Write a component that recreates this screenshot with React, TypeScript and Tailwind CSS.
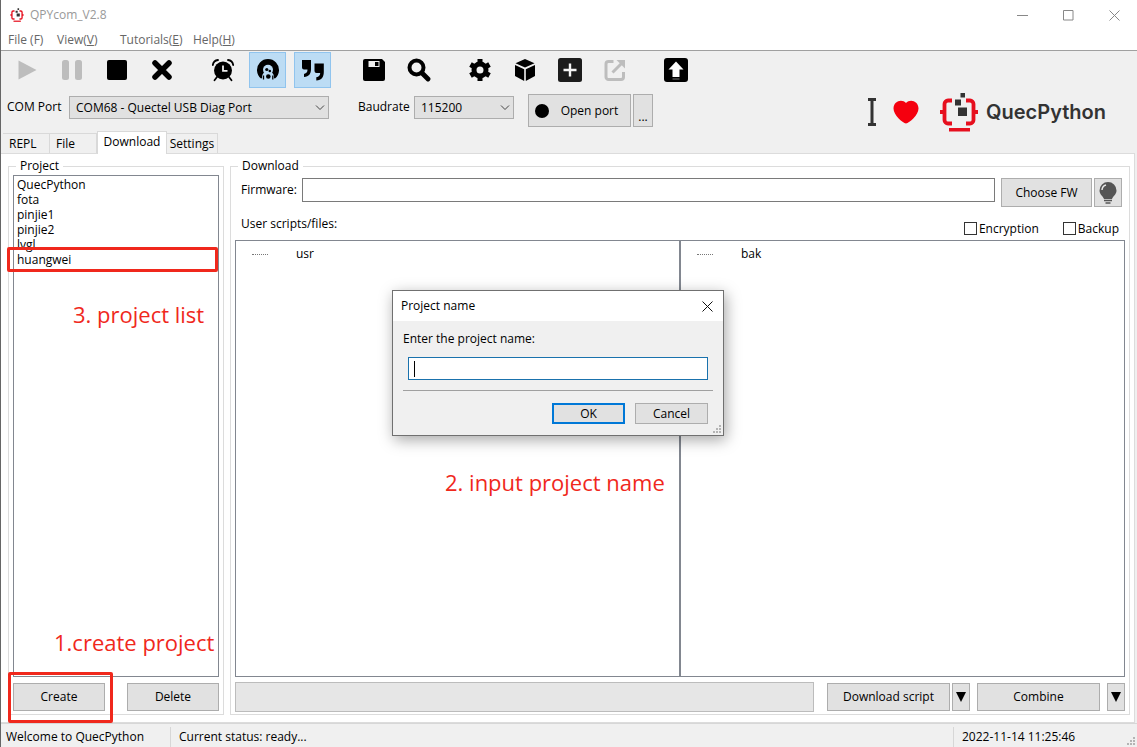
import { useState } from "react";
import type { ReactNode } from "react";
import clsx from "clsx";

const projects = ["QuecPython", "fota", "pinjie1", "pinjie2", "lvgl", "huangwei"];
const tabs = [
  { name: "REPL", width: "w-[47px]" },
  { name: "File", width: "w-[47px]" },
  { name: "Download", width: "w-[70px]" },
  { name: "Settings", width: "w-[51px]" },
];

function Icon({ children, className }: { children: ReactNode; className?: string }) {
  return (
    <svg viewBox="0 0 24 24" className={clsx("size-6", className)} fill="currentColor" aria-hidden="true">
      {children}
    </svg>
  );
}

const toolGroups: { label: string; on?: boolean; off?: boolean; icon: ReactNode }[][] = [
  [
    { label: "Run", off: true, icon: <path d="M3.500 2.500v19l18-9.500z" /> },
    {
      label: "Pause",
      off: true,
      icon: (
        <>
          <rect x="2" y="2" width="7" height="20" rx="2.500" />
          <rect x="15" y="2" width="7" height="20" rx="2.500" />
        </>
      ),
    },
    { label: "Stop", icon: <rect x="2" y="2" width="20" height="20" rx="2" /> },
    {
      label: "Clear",
      icon: <path d="M5 5l14 14M19 5L5 19" stroke="currentColor" strokeWidth="5.500" strokeLinecap="round" />,
    },
  ],
  [
    {
      label: "Timer",
      icon: (
        <>
          <circle cx="12" cy="12.500" r="9" />
          <path d="M1.800 7A6 6 0 0 1 7 2M17 2a6 6 0 0 1 5.200 5M6 19l-2.500 3.300M18 19l2.500 3.300" fill="none" stroke="currentColor" strokeWidth="1.800" strokeLinecap="round" />
          <path d="M12 7.500v5.300h4.500" fill="none" stroke="#efefef" strokeWidth="1.800" />
        </>
      ),
    },
    {
      label: "Debug",
      on: true,
      icon: (
        <>
          <path d="M5 20.500A11 11 0 1 1 19 20.500L12 18z" />
          <circle cx="12" cy="11.800" r="5" fill="#bcdcf4" />
          <circle cx="12" cy="19" r="6" fill="#bcdcf4" />
          <circle cx="10.800" cy="11.500" r="1.600" />
          <circle cx="13.800" cy="13" r="1.300" />
          <circle cx="12.300" cy="18.500" r="2.300" />
          <path d="M7.500 21.500v-4M16.800 21.500v-4" stroke="currentColor" strokeWidth="1.300" />
        </>
      ),
    },
    {
      label: "Quote",
      on: true,
      icon: (
        <>
          <path d="M1 2h9v9c0 5-2 7.500-7 8v-3c2.500-.7 3.500-2 3.500-4.500H3A2 2 0 0 1 1 9.500z" />
          <path d="M13.500 5.500h9.300V14c0 5-2 8-7.500 8.500v-3.300c2.700-.5 3.900-1.900 3.900-4.200h-3.700a2 2 0 0 1-2-2z" />
        </>
      ),
    },
  ],
  [
    {
      label: "Save",
      icon: (
        <>
          <path d="M1 3a2 2 0 0 1 2-2h17l3 3v17a2 2 0 0 1-2 2H3a2 2 0 0 1-2-2z" />
          <path d="M6.500 3h11v6h-11z" fill="#efefef" />
          <path d="M13 4h3.500v4H13z" />
        </>
      ),
    },
    {
      label: "Search",
      icon: (
        <>
          <circle cx="9.500" cy="9.500" r="7" fill="none" stroke="currentColor" strokeWidth="4" />
          <path d="M15 15l6 6" stroke="currentColor" strokeWidth="4.800" strokeLinecap="round" />
        </>
      ),
    },
  ],
  [
    {
      label: "Preferences",
      icon: (
        <>
          <circle cx="12" cy="12" r="6" fill="none" stroke="currentColor" strokeWidth="5" />
          <path d="M12 1v5M12 18v5M2.500 6.500l4.300 2.500M17.200 15l4.300 2.500M2.500 17.500L6.800 15M17.200 9l4.300-2.500" stroke="currentColor" strokeWidth="5" />
        </>
      ),
    },
    {
      label: "Package",
      icon: (
        <>
          <path d="M12 1l9.500 4.200L12 9.500 2.500 5.200z" />
          <path d="M2 7l9.200 4.200V23L2 18z" />
          <path d="M22 7l-9.200 4.200V23L22 18z" />
        </>
      ),
    },
    {
      label: "Add",
      icon: (
        <>
          <rect x="0" y="0" width="24" height="24" rx="2.500" fill="#1c1c1c" />
          <path d="M12 5.500v13M5.500 12h13" stroke="#f4f4f4" strokeWidth="2.400" />
        </>
      ),
    },
    {
      label: "Export",
      off: true,
      icon: (
        <>
          <path d="M10.500 3.500H5.500A2.500 2.500 0 0 0 3 6v13a2.500 2.500 0 0 0 2.500 2.500h12.500a2.500 2.500 0 0 0 2.500-2.500V14" fill="none" stroke="currentColor" strokeWidth="3" />
          <path d="M9.500 14.500L19 5" stroke="currentColor" strokeWidth="3" />
          <path d="M13.500 2h8.500v8.500z" />
        </>
      ),
    },
  ],
  [
    {
      label: "Upgrade",
      icon: (
        <>
          <rect x="0" y="0" width="24" height="24" rx="3" />
          <path d="M12 3.500l7.500 8h-4V19h-7v-7.500h-4z" fill="#fff" />
          <path d="M8.500 21h7" stroke="#777" />
        </>
      ),
    },
  ],
];

function BrandMark({ className }: { className?: string }) {
  return (
    <svg viewBox="0 0 40 40" className={className} aria-hidden="true">
      <path d="M13 8.500H9a3.500 3.500 0 0 0-3.500 3.500v16a3.500 3.500 0 0 0 3.500 3.500h4M27 8.500h4a3.500 3.500 0 0 1 3.500 3.500v16a3.500 3.500 0 0 1-3.500 3.500h-4M5 20H1M35 20h4" fill="none" stroke="#e60f1e" strokeWidth="3.800" />
      <path d="M10 36h21v3.500H10z" fill="#e60f1e" />
      <path d="M21.500 1h4.500v4.500h-4.500zM16 7.500h6v6h-6zM19 15.500h9v8.500h-9z" fill="#333" />
    </svg>
  );
}

function Grip({ className }: { className?: string }) {
  return (
    <svg viewBox="0 0 8 8" className={clsx("size-2", className)} fill="#b4b4b4" aria-hidden="true">
      <path d="M6 0h2v2H6zM3 3h2v2H3zM6 3h2v2H6zM0 6h2v2H0zM3 6h2v2H3zM6 6h2v2H6z" />
    </svg>
  );
}

function Picker({ id, value, className }: { id: string; value: string; className: string }) {
  return (
    <div className={clsx("relative mt-0.5", className)}>
      <select id={id} className="h-[23px] w-full appearance-none border border-[#adadad] bg-[#e1e1e1] pl-1.5">
        <option>{value}</option>
      </select>
      <svg viewBox="0 0 10 6" className="pointer-events-none absolute top-[9px] right-1 h-1.5 w-2.5" fill="none" stroke="#444" aria-hidden="true">
        <path d="M1 .5l4 4 4-4" />
      </svg>
    </div>
  );
}

function Push({ children, className, label }: { children: ReactNode; className?: string; label?: string }) {
  return (
    <button type="button" aria-label={label} className={clsx("flex items-center justify-center border border-[#adadad] bg-[#e1e1e1]", className)}>
      {children}
    </button>
  );
}

function Check({ label }: { label: string }) {
  return (
    <label className="flex items-center gap-0.5">
      <input type="checkbox" className="size-[13px] appearance-none border border-[#333] bg-white checked:bg-[#0078d7]" />
      {label}
    </label>
  );
}

function Arrow() {
  return (
    <svg viewBox="0 0 10 10" className="size-2.5" aria-hidden="true">
      <path d="M0 0h10L5 10z" />
    </svg>
  );
}

function Root({ name }: { name: string }) {
  return (
    <div className="flex h-5 items-center gap-7 pl-4">
      <span className="w-4 border-t border-dotted border-[#777]" />
      {name}
    </div>
  );
}

function ProjectDialog() {
  const [name, setName] = useState("");
  return (
    <div role="dialog" aria-labelledby="dialog-title" className="absolute top-[290px] left-[391px] w-[332px] border border-[#707070] bg-[#f0f0f0] shadow-[2px_4px_14px_rgba(0,0,0,0.35)]">
      <div className="flex h-[30px] items-center justify-between bg-white pr-2.5 pl-2">
        <h2 id="dialog-title">Project name</h2>
        <button type="button" aria-label="Close">
          <svg viewBox="0 0 11 11" className="size-[11px]" stroke="#111" aria-hidden="true">
            <path d="M.5 .5l10 10M10.500 .5l-10 10" />
          </svg>
        </button>
      </div>
      <div className="px-2.5 pt-2.5 pb-[11px]">
        <label htmlFor="project-name" className="block">Enter the project name:</label>
        <div className="relative mx-[5px] mt-2.5">
          <input
            id="project-name"
            value={name}
            onChange={(e) => setName(e.target.value)}
            className="block h-[23px] w-full border border-[#1a72ad] bg-white px-1.5 outline-none"
          />
          <span className="pointer-events-none absolute top-1 left-1.5 h-4 w-px bg-black" />
        </div>
        <div className="mt-2.5 flex justify-end gap-2.5 border-t border-[#a0a0a0] pt-3 pr-[5px]">
          <button type="button" className="h-[21px] w-[73px] border-2 border-[#0078d7] bg-[#e1e1e1] leading-4">OK</button>
          <button type="button" className="h-[21px] w-[73px] border border-[#adadad] bg-[#e1e1e1] leading-4">Cancel</button>
        </div>
      </div>
      <Grip className="absolute right-0.5 bottom-0.5" />
    </div>
  );
}

export default function App() {
  const [tab, setTab] = useState("Download");
  return (
    <div className="relative flex min-h-screen flex-col border-l border-[#666] bg-[#f0f0f0] font-['Open_Sans','Noto_Sans',sans-serif] text-[12px] leading-4 text-black">
      <header className="border-b border-[#a0a0a0] bg-white">
        <div className="flex h-[30px] items-center pl-[9px] text-[#999]">
          <BrandMark className="size-3.5" />
          <h1 className="ml-1.5">QPYcom_V2.8</h1>
          <div className="ml-auto flex gap-[35px] pr-[17px]">
            {[
              ["Minimize", "M0 5.500h11"],
              ["Maximize", "M.5 .5h9.500v9.500H.5z"],
              ["Close", "M.5 .5l10 10M10.500 .5l-10 10"],
            ].map(([label, d]) => (
              <button key={label} type="button" aria-label={label}>
                <svg viewBox="0 0 11 11" className="size-[11px]" fill="none" stroke="#888" aria-hidden="true">
                  <path d={d} />
                </svg>
              </button>
            ))}
          </div>
        </div>
        <nav className="flex h-5 items-center pl-[7px] text-[#666]">
          <button type="button" className="w-[49px] text-left">File (F)</button>
          <button type="button" className="w-[63px] text-left">View(<u>V</u>)</button>
          <button type="button" className="w-[73px] text-left">Tutorials(<u>E</u>)</button>
          <button type="button">Help(<u>H</u>)</button>
        </nav>
      </header>

      <div className="flex gap-6 px-[7px] pt-px">
        {toolGroups.map((group, i) => (
          <div key={i} className="flex gap-2">
            {group.map((t) => (
              <button
                key={t.label}
                type="button"
                aria-label={t.label}
                className={clsx(
                  "flex h-9 w-[37px] items-center justify-center border",
                  t.on ? "border-[#90c4ee] bg-[#bcdcf4]" : "border-transparent",
                  t.off ? "text-[#bdbdbd]" : "text-black",
                )}
              >
                <Icon>{t.icon}</Icon>
              </button>
            ))}
          </div>
        ))}
      </div>

      <div className="flex h-[43px] items-start pt-1.5 pr-[31px] pl-1.5">
        <label htmlFor="com-port" className="w-[62px] pt-[5px]">COM Port</label>
        <Picker id="com-port" value="COM68 - Quectel USB Diag Port" className="w-[260px]" />
        <label htmlFor="baudrate" className="ml-[29px] w-14 pt-[5px]">Baudrate</label>
        <Picker id="baudrate" value="115200" className="w-[100px]" />
        <Push className="ml-3.5 h-[33px] w-[103px] gap-3 pr-1.5">
          <span className="size-3.5 rounded-full bg-black" />
          Open port
        </Push>
        <Push label="More port options" className="ml-0.5 h-[33px] w-5 pt-3">...</Push>
        <div className="ml-auto flex h-9 items-center">
          <svg viewBox="0 0 10 28" className="h-7 w-2.5" aria-hidden="true">
            <path d="M1 0h8v3H6.500v22H9v3H1v-3h2.500V3H1z" fill="#333" />
          </svg>
          <svg viewBox="0 0 26 24" className="ml-4 h-6 w-[26px]" aria-hidden="true">
            <path d="M13 23.500C9.500 23 .5 15 .5 8.500.5 1 9 -1.500 13 3 17 -1.500 25.500 1 25.500 8.500 25.500 15 16.500 23 13 23.500z" fill="#f5000f" />
          </svg>
          <BrandMark className="ml-5 size-10" />
          <span className="ml-[7px] font-['Inter',sans-serif] text-[20px] leading-8 font-semibold text-[#333]">QuecPython</span>
        </div>
      </div>

      <div role="tablist" className="relative z-10 -mb-px flex h-[23px] items-end pl-0.5">
        {tabs.map(({ name, width }) => (
          <button
            key={name}
            type="button"
            role="tab"
            aria-selected={tab === name}
            onClick={() => setTab(name)}
            className={clsx(
              "border border-b-0 border-[#d9d9d9] text-center whitespace-nowrap",
              width,
              tab === name ? "h-[23px] bg-white pb-0.5" : "mb-px h-5 border-l-0 bg-[#f0f0f0]",
              (name === "REPL" || name === "File") && "pl-1.5 !text-left",
            )}
          >
            {name}
          </button>
        ))}
      </div>

      <main className="mr-0.5 flex flex-1 gap-1.5 border border-l-0 border-[#dcdcdc] bg-white pt-1 pr-1 pb-[7px] pl-[7px]">
        <fieldset className="flex w-[216px] flex-none flex-col border border-[#dcdcdc] px-1 pb-[3px]">
          <legend className="ml-[3px] px-1">Project</legend>
          <ul className="mt-px flex-1 border border-[#828790] bg-white px-[3px] pt-px">
            {projects.map((p) => (
              <li key={p} className="leading-[15px]">{p}</li>
            ))}
          </ul>
          <div className="mt-1.5 flex justify-between">
            <Push className="h-7 w-[92px]">Create</Push>
            <Push className="h-7 w-[92px]">Delete</Push>
          </div>
        </fieldset>

        <fieldset className="flex min-w-0 flex-1 flex-col border border-[#dcdcdc] px-1 pb-[2px]">
          <legend className="ml-[3px] px-1">Download</legend>
          <div className="flex items-start pt-1 pr-[3px] pl-1.5">
            <label htmlFor="firmware" className="w-[61px] pt-1">Firmware:</label>
            <input id="firmware" className="h-6 min-w-0 flex-1 border border-[#7a7a7a] bg-white px-1 outline-none" />
            <Push className="ml-1.5 h-[29px] w-[91px]">Choose FW</Push>
            <Push label="Hint" className="ml-0.5 h-[29px] w-7">
              <svg viewBox="0 0 18 22" className="h-[22px] w-[18px]" aria-hidden="true">
                <path d="M9 0a8.500 8.500 0 0 1 8.500 8.500c0 4-3.500 5.500-4.500 8.500H5C4 14 .5 12.500 .5 8.500A8.500 8.500 0 0 1 9 0z" fill="#555" />
                <path d="M3 8a5.500 5.500 0 0 1 4-5" fill="none" stroke="#e8e8e8" strokeWidth="1.500" />
                <path d="M5 18.500h8M6.500 21h5" stroke="#555" strokeWidth="1.500" />
              </svg>
            </Push>
          </div>
          <div className="flex h-[33px] items-center pr-1.5 pl-1.5">
            <span>User scripts/files:</span>
            <div className="ml-auto flex gap-6 pt-2.5">
              <Check label="Encryption" />
              <Check label="Backup" />
            </div>
          </div>
          <div className="flex flex-1 border border-[#828790] bg-white">
            <div className="flex-1 border-r border-[#828790] pt-[3px]"><Root name="usr" /></div>
            <div className="flex-1 border-l border-[#828790] pt-[3px]"><Root name="bak" /></div>
          </div>
          <div className="mt-[5px] flex items-center">
            <div role="progressbar" aria-label="Download progress" aria-valuenow={0} className="h-[30px] flex-1 border border-[#bcbcbc] bg-[#e6e6e6]" />
            <Push className="ml-[13px] h-7 w-[123px]">Download script</Push>
            <Push label="Script options" className="ml-0.5 h-7 w-[18px]"><Arrow /></Push>
            <Push className="ml-[7px] h-7 w-[123px]">Combine</Push>
            <Push label="Combine options" className="ml-[7px] h-7 w-[18px]"><Arrow /></Push>
          </div>
        </fieldset>
      </main>

      <footer className="relative flex h-6 items-center border-t border-[#d7d7d7] pt-[3px] pl-[5px]">
        <span className="w-[164px]">Welcome to QuecPython</span>
        <span className="flex-1 border-l border-[#d7d7d7] pl-2 leading-5">Current status: ready...</span>
        <span className="w-[184px] border-l border-[#d7d7d7] pl-2 leading-5">2022-11-14 11:25:46</span>
        <Grip className="absolute right-0.5 bottom-0.5" />
      </footer>

      <ProjectDialog />

      <div className="pointer-events-none absolute top-[247px] left-[6px] h-[25px] w-[211px] rounded-xs border-3 border-[#f0281c]" />
      <div className="pointer-events-none absolute top-[672px] left-[7px] h-[51px] w-[105px] rounded-xs border-3 border-[#f0281c]" />
      <p className="absolute top-[298px] left-[72px] text-[22px] leading-8 text-[#f0281c]">3. project list</p>
      <p className="absolute top-[466px] left-[444px] text-[22px] leading-8 text-[#f0281c]">2. input project name</p>
      <p className="absolute top-[626px] left-[53px] text-[22px] leading-8 text-[#f0281c]">1.create project</p>
    </div>
  );
}
